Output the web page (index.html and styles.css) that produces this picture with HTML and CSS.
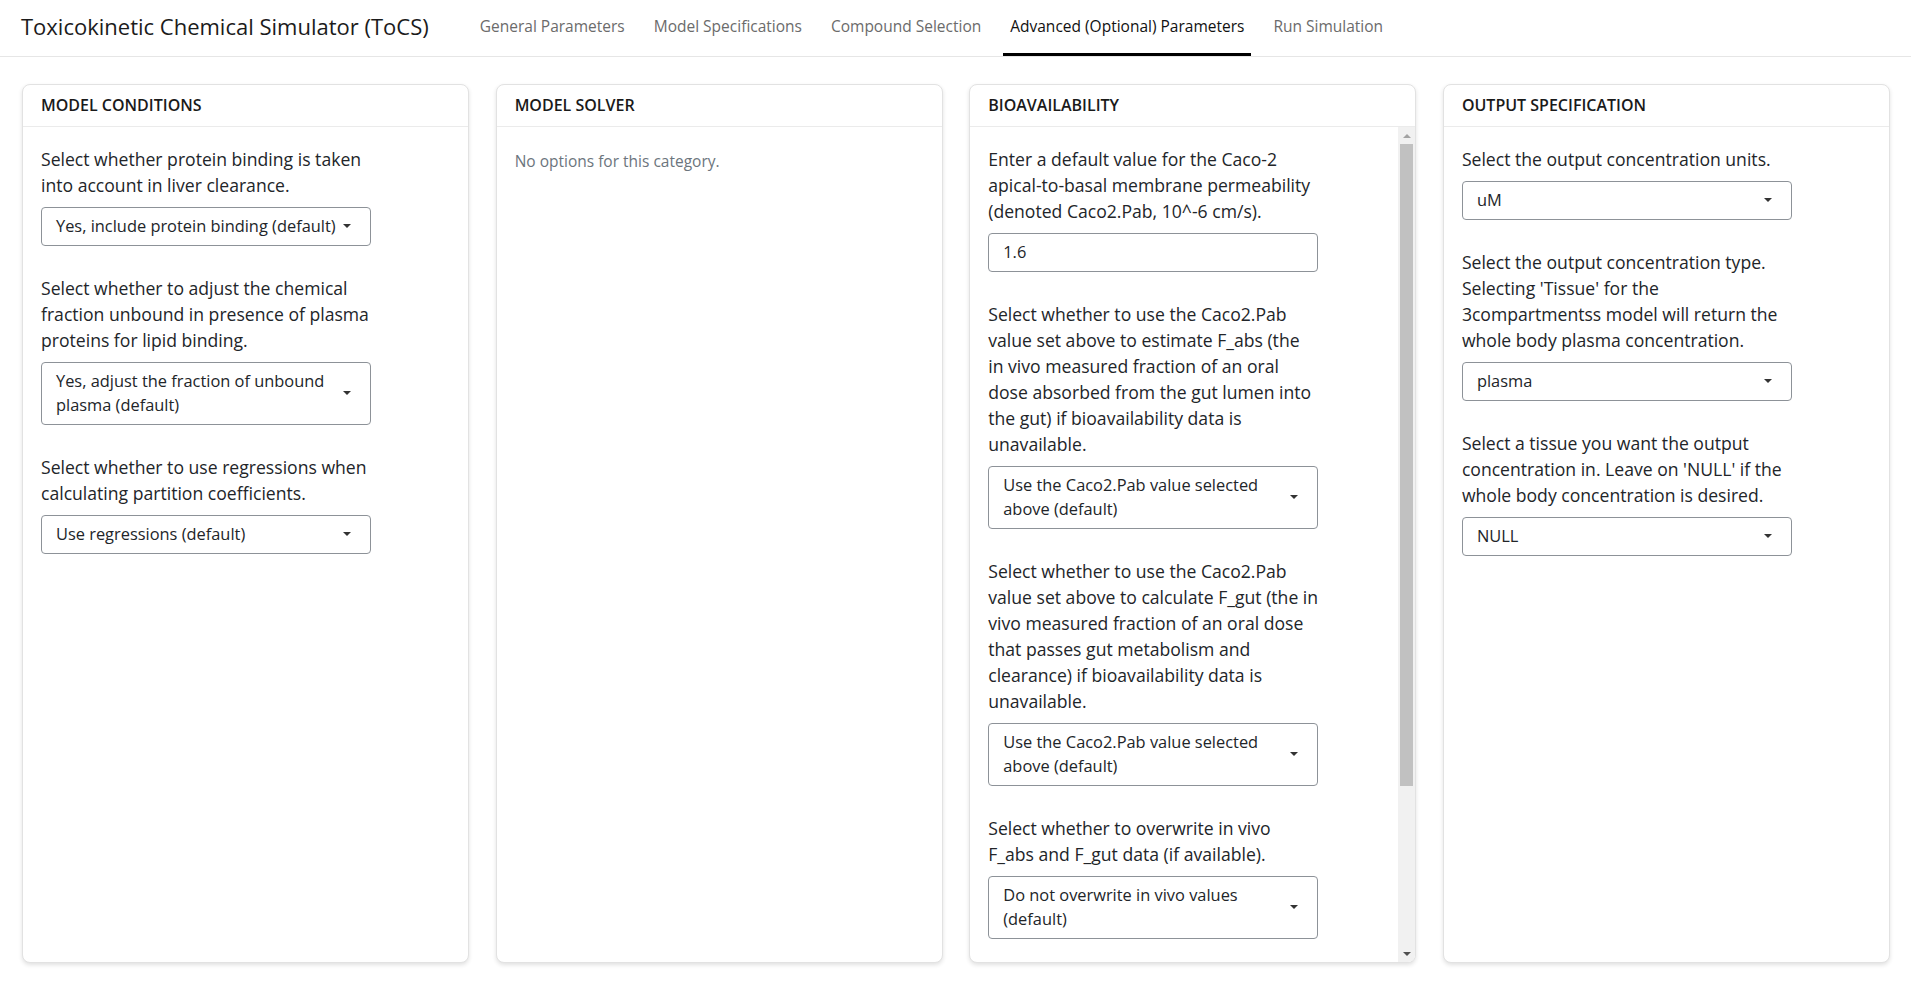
FILE: index.html
```html
<!DOCTYPE html>
<html lang="en">
<head>
<meta charset="utf-8">
<title>Toxicokinetic Chemical Simulator (ToCS)</title>
<link rel="stylesheet" href="styles.css">
</head>
<body>
<header class="navbar">
  <div class="brand">Toxicokinetic Chemical Simulator (ToCS)</div>
  <nav class="tabs">
    <a class="tab">General Parameters</a>
    <a class="tab">Model Specifications</a>
    <a class="tab">Compound Selection</a>
    <a class="tab active">Advanced (Optional) Parameters</a>
    <a class="tab">Run Simulation</a>
  </nav>
</header>
<main class="cards">
  <section class="card">
    <div class="card-header">Model Conditions</div>
    <div class="card-body">
      <div class="field">
        <label class="field-label">Select whether protein binding is taken into account in liver clearance.</label>
        <div class="select"><span class="select-value">Yes, include protein binding (default)</span><span class="caret"></span></div>
      </div>
      <div class="field">
        <label class="field-label">Select whether to adjust the chemical fraction unbound in presence of plasma proteins for lipid binding.</label>
        <div class="select"><span class="select-value">Yes, adjust the fraction of unbound plasma (default)</span><span class="caret"></span></div>
      </div>
      <div class="field">
        <label class="field-label">Select whether to use regressions when calculating partition coefficients.</label>
        <div class="select"><span class="select-value">Use regressions (default)</span><span class="caret"></span></div>
      </div>
    </div>
  </section>
  <section class="card">
    <div class="card-header">Model Solver</div>
    <div class="card-body">
      <p class="muted">No options for this category.</p>
    </div>
  </section>
  <section class="card">
    <div class="card-header">Bioavailability</div>
    <div class="card-body scrollable">
      <div class="scroll-content">
        <div class="field">
          <label class="field-label">Enter a default value for the Caco-2 apical-to-basal membrane permeability (denoted Caco2.Pab, 10^-6 cm/s).</label>
          <div class="select input"><span class="select-value">1.6</span></div>
        </div>
        <div class="field">
          <label class="field-label">Select whether to use the Caco2.Pab value set above to estimate F_abs (the in vivo measured fraction of an oral dose absorbed from the gut lumen into the gut) if bioavailability data is unavailable.</label>
          <div class="select"><span class="select-value">Use the Caco2.Pab value selected above (default)</span><span class="caret"></span></div>
        </div>
        <div class="field">
          <label class="field-label">Select whether to use the Caco2.Pab value set above to calculate F_gut (the in vivo measured fraction of an oral dose that passes gut metabolism and clearance) if bioavailability data is unavailable.</label>
          <div class="select"><span class="select-value">Use the Caco2.Pab value selected above (default)</span><span class="caret"></span></div>
        </div>
        <div class="field">
          <label class="field-label">Select whether to overwrite in vivo F_abs and F_gut data (if available).</label>
          <div class="select"><span class="select-value">Do not overwrite in vivo values (default)</span><span class="caret"></span></div>
        </div>
      </div>
      <div class="scrollbar">
        <div class="sb-btn"><span class="sb-arrow up"></span></div>
        <div class="sb-thumb"></div>
        <div class="sb-track"></div>
        <div class="sb-btn"><span class="sb-arrow down"></span></div>
      </div>
    </div>
  </section>
  <section class="card">
    <div class="card-header">Output Specification</div>
    <div class="card-body">
      <div class="field">
        <label class="field-label">Select the output concentration units.</label>
        <div class="select"><span class="select-value">uM</span><span class="caret"></span></div>
      </div>
      <div class="field">
        <label class="field-label">Select the output concentration type. Selecting 'Tissue' for the 3compartmentss model will return the whole body plasma concentration.</label>
        <div class="select"><span class="select-value">plasma</span><span class="caret"></span></div>
      </div>
      <div class="field">
        <label class="field-label">Select a tissue you want the output concentration in. Leave on 'NULL' if the whole body concentration is desired.</label>
        <div class="select"><span class="select-value">NULL</span><span class="caret"></span></div>
      </div>
    </div>
  </section>
</main>
</body>
</html>
```

FILE: styles.css
```css
* { box-sizing: border-box; }

html, body {
  margin: 0;
  height: 100%;
}

body {
  display: flex;
  flex-direction: column;
  overflow: hidden;
  background: #ffffff;
  color: #222529;
  font-family: "Open Sans", "Noto Sans", sans-serif;
  font-size: 17.6px;
}

.navbar {
  display: flex;
  align-items: stretch;
  height: 57px;
  border-bottom: 1px solid #e6e6e6;
  padding-left: 21px;
  flex: none;
}

.brand {
  display: flex;
  align-items: center;
  font-size: 22px;
  color: #1b1b1b;
  margin-right: 44px;
  padding-bottom: 5px;
}

.tabs {
  display: flex;
  gap: 15px;
}

.tab {
  display: flex;
  align-items: center;
  padding: 0 7px 1px;
  color: #6b6b6b;
  font-size: 15.5px;
  border-bottom: 3px solid transparent;
  cursor: pointer;
}

.tab.active {
  color: #111111;
  border-bottom-color: #000000;
}

.cards {
  flex: 1;
  min-height: 0;
  display: grid;
  grid-template-columns: repeat(4, minmax(0, 1fr));
  column-gap: 26.5px;
  padding: 27px 21px 20px 22px;
}

.card {
  display: flex;
  flex-direction: column;
  min-height: 0;
  background: #ffffff;
  border: 1px solid #e2e2e2;
  border-radius: 8px;
  box-shadow: 0 2px 4px rgba(0, 0, 0, 0.12);
  overflow: hidden;
}

.card-header {
  flex: none;
  padding: 8px 18px 9px;
  line-height: 24px;
  font-size: 16px;
  font-weight: 600;
  text-transform: uppercase;
  color: #1a1a1a;
  border-bottom: 1px solid #ebebeb;
}

.card-body {
  flex: 1;
  min-height: 0;
  padding: 19px 18px;
}

.field {
  width: 330px;
  margin-bottom: 29px;
}

.field-label {
  display: block;
  line-height: 26px;
  margin-bottom: 9px;
  color: #222529;
}

.select {
  display: flex;
  align-items: center;
  gap: 6px;
  border: 1px solid #8d9298;
  border-radius: 4px;
  padding: 6px 19px 7px 14px;
  line-height: 24px;
  font-size: 16.4px;
  color: #222529;
  background: #ffffff;
}

.select-value {
  flex: 1;
  min-width: 0;
}

.caret {
  flex: none;
  width: 0;
  height: 0;
  border-left: 4.5px solid transparent;
  border-right: 4.5px solid transparent;
  border-top: 4.5px solid #333333;
}

.muted {
  margin: 4px 0 0;
  font-size: 15.5px;
  line-height: 22px;
  color: #6c757d;
}

.card-body.scrollable {
  display: flex;
  padding: 0;
  overflow: hidden;
}

.scroll-content {
  flex: 1;
  min-width: 0;
  padding: 19px 18px;
  overflow: hidden;
}

.scrollbar {
  flex: none;
  width: 17px;
  display: flex;
  flex-direction: column;
  background: #f1f1f1;
}

.sb-btn {
  flex: none;
  height: 17px;
  display: flex;
  align-items: center;
  justify-content: center;
}

.sb-arrow {
  width: 0;
  height: 0;
  border-left: 4px solid transparent;
  border-right: 4px solid transparent;
}

.sb-arrow.up {
  border-bottom: 4px solid #a3a3a3;
}

.sb-arrow.down {
  border-top: 4px solid #505050;
}

.sb-thumb {
  flex: none;
  height: 642px;
  margin: 0 2px;
  background: #c1c1c1;
}

.sb-track {
  flex: 1;
}
```
